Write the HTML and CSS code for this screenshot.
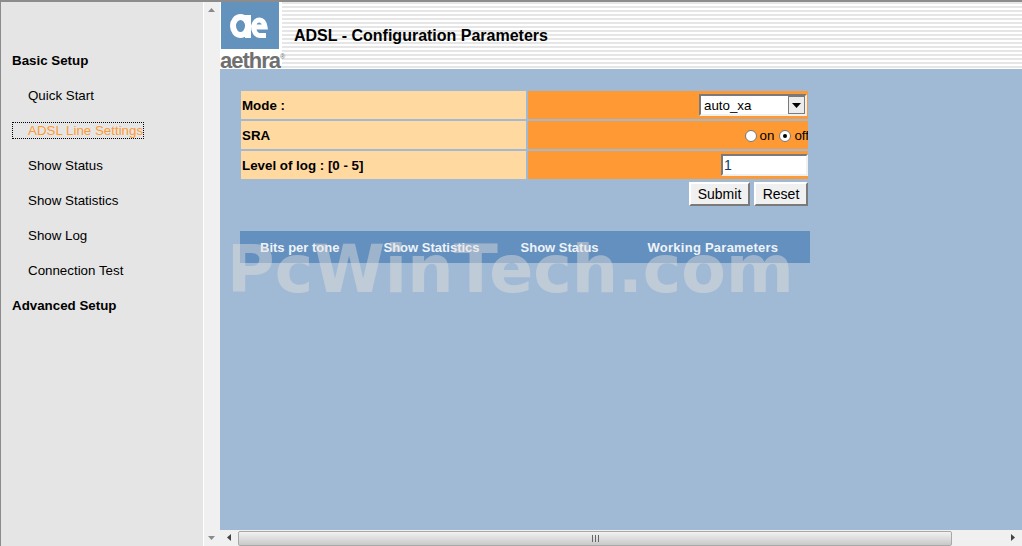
FILE: index.html
```html
<!DOCTYPE html>
<html lang="en">
<head>
  <meta charset="UTF-8">
  <title>ADSL - Configuration Parameters</title>
  <link rel="stylesheet" href="styles.css">
</head>
<body>

<div class="page">
  <div class="menu">
    <div class="menu-head">Basic Setup</div>
    <a class="menu-link" href="#">Quick Start</a>
    <a class="menu-link active" href="#"><span class="focus">ADSL Line Settings</span></a>
    <a class="menu-link" href="#">Show Status</a>
    <a class="menu-link" href="#">Show Statistics</a>
    <a class="menu-link" href="#">Show Log</a>
    <a class="menu-link" href="#">Connection Test</a>
    <div class="menu-head">Advanced Setup</div>
  </div>

  <div class="vscroll">
    <svg width="16" height="16" viewBox="0 0 16 16"><path d="M4 10h7L7.500 6z" fill="#8a8a8a"/></svg>
    <svg width="16" height="16" viewBox="0 0 16 16"><path d="M4 6h7l-3.500 4z" fill="#8a8a8a"/></svg>
  </div>

  <div class="main">
    <div class="frame">
      <div class="header">
        <div class="logo">
          <div class="logo-box">
            <svg width="58" height="47" viewBox="0 0 58 47" fill="none" stroke="#fff">
              <ellipse cx="19.500" cy="24" rx="7.500" ry="9" stroke-width="6"/>
              <path d="M27 13V36" stroke-width="6"/>
              <path d="M32 25H44A6 9 0 0 0 32.500 24A6 9 0 0 0 38.500 33.500H45" stroke-width="5"/>
            </svg>
          </div>
          <div class="logo-name">aethra<sup class="logo-reg">®</sup></div>
        </div>
        <h1 class="title">ADSL - Configuration Parameters</h1>
      </div>

      <div class="content">
        <form class="config">
          <div class="row">
            <div class="label">Mode :</div>
            <div class="value">
              <div class="select-box">
                <span class="select-text">auto_xa</span>
                <span class="select-btn"><svg width="9" height="5" viewBox="0 0 9 5"><path d="M0 0h9L4.500 5z" fill="#000"/></svg></span>
              </div>
            </div>
          </div>
          <div class="row">
            <div class="label">SRA</div>
            <div class="value value-radios">
              <span class="radio"></span><span class="radio-text">on</span>
              <span class="radio checked"></span><span class="radio-text">off</span>
            </div>
          </div>
          <div class="row">
            <div class="label">Level of log : [0 - 5]</div>
            <div class="value"><div class="text-box">1</div></div>
          </div>
          <div class="buttons">
            <button type="button" class="btn btn-submit">Submit</button>
            <button type="button" class="btn btn-reset">Reset</button>
          </div>
        </form>

        <div class="tabs">
          <span class="tab tab-bits">Bits per tone</span>
          <span class="tab tab-stats">Show Statistics</span>
          <span class="tab tab-status">Show Status</span>
          <span class="tab tab-work">Working Parameters</span>
        </div>

        <div class="watermark">PcWinTech.com</div>
      </div>
    </div>

    <div class="hscroll">
      <svg width="18" height="16" viewBox="0 0 18 16"><path d="M11 4v7L7 7.500z" fill="#444"/></svg>
      <div class="thumb"><span class="grip"></span></div>
      <svg width="18" height="16" viewBox="0 0 18 16"><path d="M7 4v7l4-3.500z" fill="#444"/></svg>
    </div>
  </div>
</div>

</body>
</html>
```

FILE: styles.css
```css
html, body {
  margin: 0;
  height: 100%;
  overflow: hidden;
}
body {
  font-family: "Liberation Sans", Arial, sans-serif;
  font-size: 13.33px;
  color: #000;
  background: #e5e5e5;
}
.page {
  display: flex;
  height: 546px;
  border-top: 2px solid #8c8c8c;
  box-sizing: border-box;
}

/* left menu */
.menu {
  width: 204px;
  flex: none;
  box-sizing: border-box;
  padding-top: 41px;
  border-left: 1px solid #8c8c8c;
  border-right: 1px solid #fff;
  background: #e5e5e5;
}
.menu-head {
  height: 35px;
  line-height: 35px;
  margin-left: 11px;
  font-weight: bold;
}
.menu-link {
  display: block;
  height: 35px;
  line-height: 35px;
  margin-left: 27px;
  color: #000;
  text-decoration: none;
}
.menu-link.active {
  color: #ff9933;
}
.focus {
  display: inline-block;
  line-height: 15px;
  margin-left: -15px;
  padding-left: 15px;
  outline: 1px dotted #000;
}

.vscroll {
  width: 16px;
  flex: none;
  background: #f0f0f0;
  display: flex;
  flex-direction: column;
  justify-content: space-between;
}
.vscroll svg {
  display: block;
}

.main {
  flex: 1;
  min-width: 0;
  display: flex;
  flex-direction: column;
}
.frame {
  flex: 1;
  min-height: 0;
  display: flex;
  flex-direction: column;
  background: #a0bad6;
}

/* header */
.header {
  height: 67px;
  flex: none;
  display: flex;
  align-items: center;
  box-sizing: border-box;
  border-bottom: 1px solid #fff;
  background: repeating-linear-gradient(to bottom, #e6e6e6 0, #e6e6e6 2px, #fff 2px, #fff 4px);
}
.logo {
  width: 62px;
  height: 66px;
  flex: none;
  background: #fff;
}
.logo-box {
  width: 58px;
  height: 47px;
  margin-left: 1px;
  background: #6393bd;
}
.logo-box svg {
  display: block;
}
.logo-name {
  margin-top: 3px;
  font-weight: bold;
  font-size: 22px;
  letter-spacing: -1px;
  line-height: 17px;
  color: #707070;
  white-space: nowrap;
}
.logo-reg {
  font-size: 7px;
  font-weight: normal;
  letter-spacing: 0;
  line-height: 0;
  vertical-align: 9px;
}
.title {
  margin: 0 0 0 12px;
  padding-top: 1px;
  font-size: 16px;
  font-weight: bold;
}

/* form */
.content {
  position: relative;
  flex: 1;
  padding: 22px 0 0 21px;
}
.config {
  width: 567px;
}
.row {
  display: flex;
  gap: 2px;
  height: 28px;
  margin-bottom: 2px;
}
.label {
  width: 285px;
  flex: none;
  box-sizing: border-box;
  padding-left: 1px;
  line-height: 29px;
  font-weight: bold;
  background: #ffd9a0;
}
.value {
  flex: 1;
  display: flex;
  align-items: center;
  justify-content: flex-end;
  background: #ff9933;
}
.value-radios {
  padding-top: 2px;
  box-sizing: border-box;
  overflow: hidden;
}
.select-box {
  display: flex;
  width: 108px;
  height: 22px;
  margin-right: 1px;
  box-sizing: border-box;
  background: #fff;
  border: 2px solid;
  border-color: #7a7a7a #f0f0f0 #f0f0f0 #7a7a7a;
  line-height: 19px;
}
.select-text {
  flex: 1;
  padding-left: 3px;
}
.select-btn {
  width: 17px;
  display: flex;
  align-items: center;
  justify-content: center;
  box-sizing: border-box;
  background: #ececec;
  border: 1px solid #7a7a7a;
}
.radio {
  width: 12px;
  height: 12px;
  box-sizing: border-box;
  border-radius: 50%;
  border: 1px solid #777;
  background: #fff;
  display: flex;
  align-items: center;
  justify-content: center;
}
.radio.checked::after {
  content: "";
  width: 4px;
  height: 4px;
  border-radius: 50%;
  background: #000;
}
.radio-text {
  margin: 0 5px 0 3px;
  line-height: 14px;
}
.radio-text:last-child {
  margin-right: -1px;
}
.text-box {
  width: 87px;
  height: 22px;
  box-sizing: border-box;
  background: #fff;
  border: 2px solid;
  border-color: #7a7a7a #f0f0f0 #f0f0f0 #7a7a7a;
  padding-left: 1px;
  font-size: 14px;
  line-height: 18px;
  color: #0a3d6b;
}
.buttons {
  display: flex;
  justify-content: flex-end;
  gap: 4px;
  margin-top: 3px;
}
.btn {
  height: 24px;
  padding: 0;
  font-family: inherit;
  font-size: 14px;
  color: #000;
  background: #f0f0f0;
  border: 2px solid;
  border-color: #fff #7a7a7a #7a7a7a #fff;
}
.btn-submit {
  width: 61px;
}
.btn-reset {
  width: 54px;
}

/* tab bar */
.tabs {
  width: 570px;
  height: 32px;
  margin: 25px 0 0 -1px;
  display: flex;
  align-items: center;
  background: #6390bf;
  color: #eef3f8;
  font-size: 13px;
  font-weight: bold;
}
.tab-bits {
  margin-left: 20px;
}
.tab-stats {
  margin-left: 44px;
}
.tab-status {
  margin-left: 41px;
}
.tab-work {
  margin-left: 49px;
  letter-spacing: 0.25px;
}

.watermark {
  position: absolute;
  left: 7px;
  top: 161px;
  font-family: "DejaVu Sans", sans-serif;
  font-size: 65px;
  font-weight: bold;
  line-height: 80px;
  color: rgba(230, 225, 220, 0.45);
  white-space: nowrap;
}

/* bottom scrollbar */
.hscroll {
  height: 16px;
  flex: none;
  display: flex;
  align-items: center;
  background: #f0f0f0;
}
.hscroll svg {
  flex: none;
}
.thumb {
  width: 714px;
  height: 15px;
  box-sizing: border-box;
  display: flex;
  align-items: center;
  justify-content: center;
  margin-right: auto;
  border: 1px solid #a8a8a8;
  border-radius: 2px;
  background: linear-gradient(to bottom, #f2f2f2, #c8c8c8);
}
.grip {
  width: 7px;
  height: 7px;
  background: repeating-linear-gradient(to right, #666 0, #666 1px, transparent 1px, transparent 3px);
}
```
